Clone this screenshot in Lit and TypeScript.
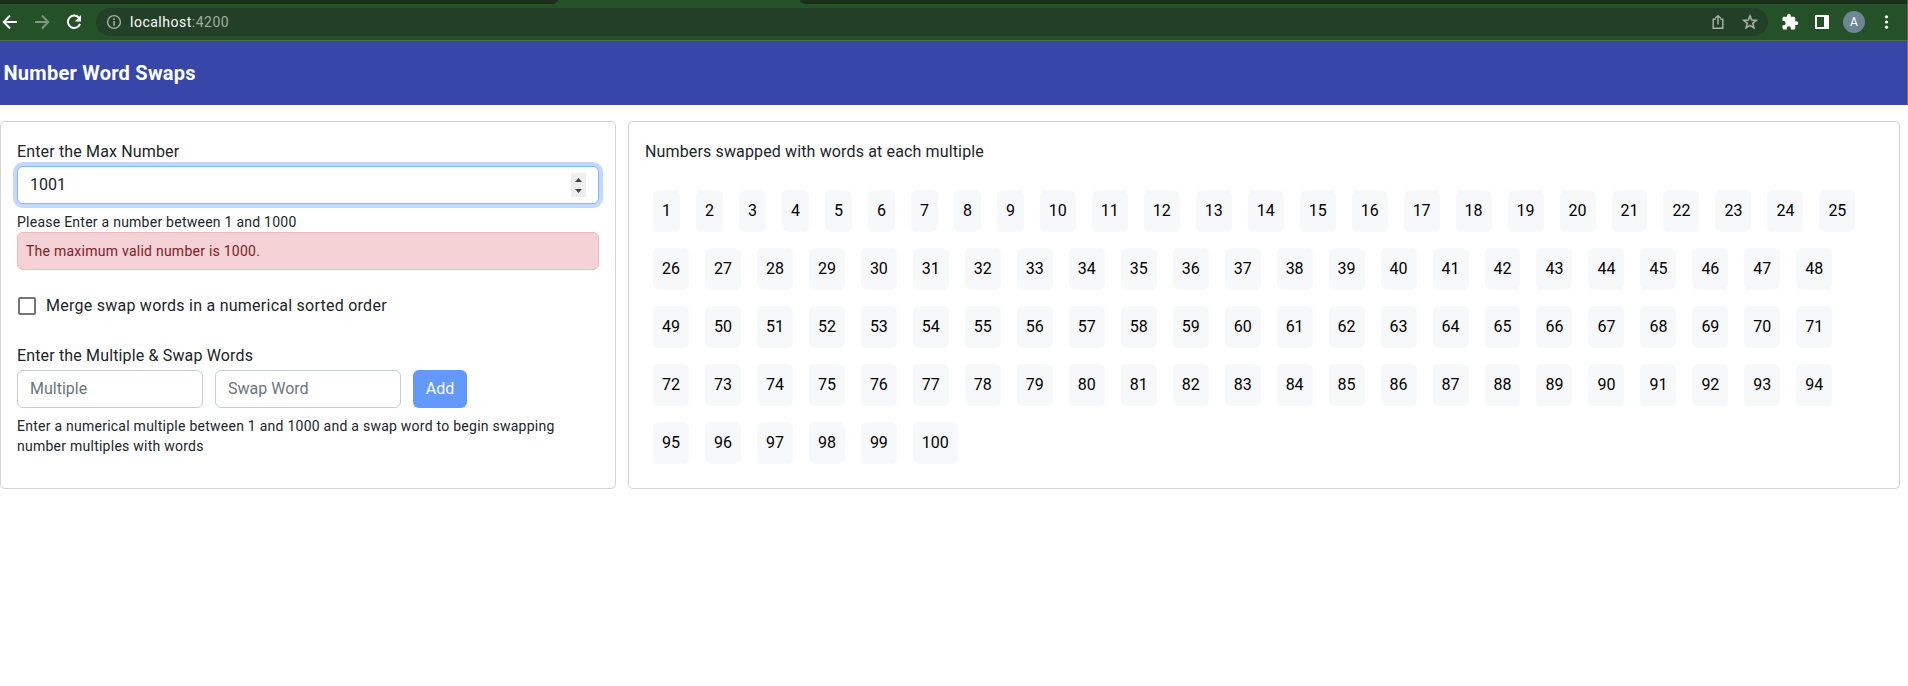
import { LitElement, html, css } from "lit";
import { customElement } from "lit/decorators.js";

@customElement("browser-bar")
class BrowserBar extends LitElement {
  static styles = css`
    :host { display: block; height: 41px; box-sizing: border-box; background: #245127; border-right: 1px solid #4c7150; border-bottom: 1px solid #4c7150; font-family: Roboto, sans-serif; }
    .tabs { display: flex; justify-content: space-between; height: 4px; }
    .tab { background: #1a301b; height: 4px; }
    .left { width: 558px; border-bottom-right-radius: 6px 4px; }
    .right { width: 1107px; border-bottom-left-radius: 6px 4px; }
    .row { display: flex; align-items: center; height: 28px; padding-top: 4px; }
    svg { display: block; flex: none; }
    .nav { display: flex; flex: none; width: 96px; box-sizing: border-box; padding-left: 2px; gap: 16px; }
    .omni { display: flex; flex: none; align-items: center; width: 1672px; height: 28px; box-sizing: border-box; padding: 0 9px 0 10px; border-radius: 14px; background: #233f27; color: #fff; }
    .url { flex: 1; padding-left: 8px; font-size: 14px; line-height: 20px; letter-spacing: 0.51px; }
    .port { color: #9db09f; }
    .star { margin-left: 15px; }
    .tools { display: flex; flex: none; align-items: center; padding-left: 13px; }
    .panel { margin-left: 16px; }
    .avatar { display: grid; place-items: center; width: 22px; height: 22px; margin-left: 14px; border-radius: 50%; background: #6e8593; color: #fff; font-size: 12px; }
    .dots { margin-left: 12px; }
  `;
  render() {
    return html`
      <div class="tabs"><div class="tab left"></div><div class="tab right"></div></div>
      <div class="row">
        <div class="nav">
          <svg width="16" height="16" viewBox="0 0 16 16" fill="none" stroke="#fff" stroke-width="2"><path d="M15 8H2.5M8 1.5L1.8 8L8 14.5"/></svg>
          <svg width="16" height="16" viewBox="0 0 16 16" fill="none" stroke="#7d967e" stroke-width="2"><path d="M1 8h12.5M8 1.5L14.2 8L8 14.5"/></svg>
          <svg width="16" height="16" viewBox="0 0 16 16"><path d="M13.2 4.2A6.2 6.2 0 1 0 14 9.8" fill="none" stroke="#fff" stroke-width="2"/><path d="M15 1v6.5H8.7z" fill="#fff"/></svg>
        </div>
        <div class="omni">
          <svg width="16" height="16" viewBox="0 0 16 16"><circle cx="8" cy="8" r="6.4" fill="none" stroke="#a3b0a4" stroke-width="1.4"/><path d="M7.2 4.3h1.6v1.6H7.2zM7.2 7.1h1.6v4.6H7.2z" fill="#a3b0a4"/></svg>
          <div class="url">localhost<span class="port">:4200</span></div>
          <svg width="16" height="16" viewBox="0 0 16 16" fill="none" stroke="#a9b5aa" stroke-width="1.4"><path d="M5.5 5.2H3.2v9.1h9.6V5.2h-2.3M8 10.5V1.8M5.2 4.3L8 1.6l2.8 2.7"/></svg>
          <svg class="star" width="18" height="16" viewBox="0 0 18 16" fill="none" stroke="#a9b5aa" stroke-width="1.5"><path d="M9 1.8l1.7 4.3 4.5.3-3.5 2.9 1.2 4.5L9 11.3l-3.9 2.5 1.2-4.5-3.5-2.9 4.5-.3z"/></svg>
        </div>
        <div class="tools">
          <svg width="18" height="18" viewBox="0 0 24 24" fill="#fff"><path d="M20.5 11H19V7c0-1.1-.9-2-2-2h-4V3.5a2.5 2.5 0 0 0-5 0V5H4c-1.1 0-2 .9-2 2v3.8h1.5a2.7 2.7 0 0 1 0 5.4H2V20c0 1.1.9 2 2 2h3.8v-1.5a2.7 2.7 0 0 1 5.4 0V22H17c1.1 0 2-.9 2-2v-4h1.5a2.5 2.5 0 0 0 0-5z"/></svg>
          <svg class="panel" width="14" height="14" viewBox="0 0 14 14"><path d="M0 0h14v14H0zM2 2v10h7V2z" fill="#fff" fill-rule="evenodd"/></svg>
          <div class="avatar">A</div>
          <svg class="dots" width="18" height="16" viewBox="0 0 18 16" fill="#fff"><circle cx="9.5" cy="2.8" r="1.6"/><circle cx="9.5" cy="8" r="1.6"/><circle cx="9.5" cy="13.2" r="1.6"/></svg>
        </div>
      </div>`;
  }
}

@customElement("settings-card")
class SettingsCard extends LitElement {
  static styles = css`
    :host { display: block; box-sizing: border-box; width: 616px; height: 368px; padding: 18px 16px 16px; border: 1px solid #d3d3d3; border-radius: 5px; color: #212529; }
    .label { font-size: 16px; line-height: 24px; letter-spacing: 0.15px; }
    .field { display: flex; align-items: center; box-sizing: border-box; height: 38px; padding: 0 12px; border: 1px solid #c5cdd5; border-radius: 6px; background: #fff; font-size: 16px; }
    .field span { padding-bottom: 2px; }
    .focused { justify-content: space-between; margin-top: 2px; border-color: #86b7fe; box-shadow: 0 0 0 4px #c2d8fe; }
    .spin { width: 15px; height: 24px; display: block; }
    .hint { font-size: 14px; line-height: 20px; letter-spacing: 0.25px; }
    .under { margin-top: 8px; }
    .error { box-sizing: border-box; height: 38px; padding: 8px; border: 1px solid #f1b8bd; border-radius: 6px; background: #f5d2d5; color: #7c2029; }
    .check { display: flex; align-items: center; gap: 10px; height: 24px; margin-top: 24px; padding-left: 1px; font-size: 16px; letter-spacing: 0.25px; }
    .check span { padding-bottom: 2px; }
    .box { box-sizing: border-box; width: 18px; height: 18px; border: 2px solid #757575; border-radius: 2px; }
    .swap { margin-top: 26px; }
    .row { display: flex; gap: 12px; margin-top: 2px; }
    .half { width: 186px; color: #6c757d; }
    .add { width: 54px; height: 38px; border-radius: 6px; background: #6399fd; color: #fff; font-size: 16px; line-height: 38px; text-align: center; }
  `;
  render() {
    return html`
      <div class="label">Enter the Max Number</div>
      <div class="field focused"><span>1001</span>
        <svg class="spin" viewBox="0 0 15 24"><path d="M0 0h15v24H0z" fill="#efefef"/><path d="M7.5 5l3.5 4H4zM7.5 20l3.5-4H4z" fill="#444"/></svg>
      </div>
      <div class="hint under">Please Enter a number between 1 and 1000</div>
      <div class="hint error">The maximum valid number is 1000.</div>
      <div class="check"><div class="box"></div><span>Merge swap words in a numerical sorted order</span></div>
      <div class="label swap">Enter the Multiple &amp; Swap Words</div>
      <div class="row"><div class="field half"><span>Multiple</span></div><div class="field half"><span>Swap Word</span></div><div class="add">Add</div></div>
      <div class="hint under">Enter a numerical multiple between 1 and 1000 and a swap word to begin swapping number multiples with words</div>`;
  }
}

@customElement("numbers-card")
class NumbersCard extends LitElement {
  static styles = css`
    :host { display: block; box-sizing: border-box; width: 1272px; height: 368px; padding: 18px 16px 16px; border: 1px solid #d3d3d3; border-radius: 5px; }
    .label { font-size: 16px; line-height: 24px; letter-spacing: 0.14px; color: #212529; }
    .list { display: flex; flex-wrap: wrap; margin-top: 18px; }
    .chip { margin: 8px; padding: 9px; border-radius: 6px; background: #f7f8fa; color: #000; font-size: 16px; line-height: 24px; letter-spacing: -0.01px; }
  `;
  render() {
    return html`
      <div class="label">Numbers swapped with words at each multiple</div>
      <div class="list">${Array.from({ length: 100 }, (_, i) => html`<span class="chip">${i + 1}</span>`)}</div>`;
  }
}

@customElement("app-root")
class AppRoot extends LitElement {
  static styles = css`
    :host { display: block; height: 686px; overflow: hidden; background: #fff; font-family: Roboto, sans-serif; }
    .header { display: flex; align-items: center; box-sizing: border-box; height: 64px; padding-left: 3.5px; border-right: 1px solid #6572bb; background: #3747a9; color: #fff; font-size: 20px; font-weight: 700; line-height: 32px; letter-spacing: 0.25px; }
    .cards { display: flex; gap: 12px; padding-top: 16px; }
  `;
  render() {
    return html`
      <browser-bar></browser-bar>
      <div class="header">Number Word Swaps</div>
      <div class="cards"><settings-card></settings-card><numbers-card></numbers-card></div>`;
  }
}
